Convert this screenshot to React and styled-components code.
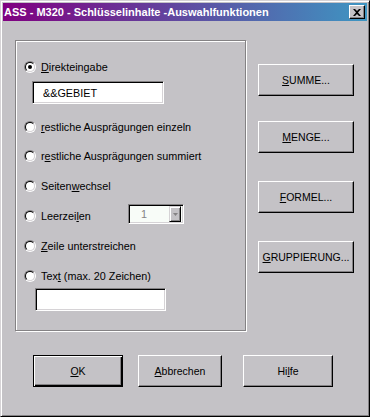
import React from "react";
import styled, { createGlobalStyle } from "styled-components";

const GlobalStyle = createGlobalStyle`
	html, body {
		margin: 0;
		padding: 0;
		background: #c4c2c6;
	}
	body {
		font-family: "Liberation Sans", Arial, sans-serif;
		font-size: 10.8px;
		color: #000;
	}
`;

const Window = styled.div`
	width: 370px;
	height: 417px;
	box-sizing: border-box;
	background: #c4c2c6;
	border: 1px solid;
	border-color: #d6d3d6 #000 #000 #d6d3d6;
	box-shadow: inset 1px 1px #fff, inset -1px -1px #848284;
	padding: 2px;
	display: flex;
	flex-direction: column;
`;

const TitleBar = styled.div`
	height: 18px;
	flex-shrink: 0;
	display: flex;
	align-items: center;
	padding: 0 2px 0 1px;
	background: linear-gradient(to right, #800080, #3e96c2);
	color: #fff;
	font-weight: bold;
	font-size: 11px;
`;

const TitleText = styled.span`
	flex: 1;
	white-space: nowrap;
`;

const CloseButton = styled.div`
	width: 16px;
	height: 14px;
	box-sizing: border-box;
	background: #c4c2c6;
	border: 1px solid;
	border-color: #fff #000 #000 #fff;
	box-shadow: inset -1px -1px #848284;
	display: flex;
	align-items: center;
	justify-content: center;
`;

const Main = styled.div`
	display: flex;
	padding: 19px 0 0 12px;
`;

const GroupBox = styled.div`
	width: 231px;
	height: 291px;
	box-sizing: border-box;
	border: 1px solid #848284;
	box-shadow: inset 1px 1px #fff, 1px 1px #fff;
	padding: 16px 0 0 8px;
	display: flex;
	flex-direction: column;
`;

const OptionRow = styled.div`
	display: flex;
	align-items: center;
	height: 20px;
	margin-top: ${(p) => p.$mt || 0}px;
`;

const Radio = styled.span`
	position: relative;
	width: 12px;
	height: 12px;
	box-sizing: border-box;
	border-radius: 50%;
	border: 1px solid;
	border-color: #848284 #fff #fff #848284;
	margin-right: 5px;
	flex-shrink: 0;
	&::before {
		content: "";
		position: absolute;
		inset: 0;
		border-radius: 50%;
		border: 1px solid;
		border-color: #000 #d6d3d6 #d6d3d6 #000;
		background: #fff;
	}
	&::after {
		content: "";
		display: ${(p) => (p.$checked ? "block" : "none")};
		position: absolute;
		left: 3px;
		top: 3px;
		width: 4px;
		height: 4px;
		border-radius: 50%;
		background: #000;
	}
`;

const Label = styled.span`
	white-space: nowrap;
	width: ${(p) => (p.$w ? `${p.$w}px` : "auto")};
`;

const Key = styled.span`
	text-decoration: underline;
`;

const TextField = styled.input`
	width: ${(p) => p.$w}px;
	height: 23px;
	box-sizing: border-box;
	margin: ${(p) => p.$mt}px 0 0 ${(p) => p.$ml}px;
	border: 1px solid;
	border-color: #848284 #fff #fff #848284;
	box-shadow: inset 1px 1px #000, inset -1px -1px #d6d3d6;
	background: #fff;
	outline: none;
	padding: 0 0 0 10px;
	font-family: "Liberation Sans", Arial, sans-serif;
	font-size: 10.8px;
	color: #000;
`;

const Combo = styled.div`
	width: 56px;
	height: 20px;
	box-sizing: border-box;
	margin-bottom: 4px;
	border: 1px solid;
	border-color: #848284 #fff #fff #848284;
	box-shadow: inset 1px 1px #000, inset -1px -1px #d6d3d6;
	background: #f8fcf8;
	display: flex;
	align-items: center;
	padding: 2px;
	color: #848284;
`;

const ComboValue = styled.span`
	flex: 1;
	padding-left: 10px;
`;

const ComboArrow = styled.div`
	width: 12px;
	height: 16px;
	box-sizing: border-box;
	background: #c4c2c6;
	border: 1px solid;
	border-color: #d6d3d6 #000 #000 #d6d3d6;
	box-shadow: inset 1px 1px #fff, inset -1px -1px #848284;
	display: flex;
	align-items: center;
	justify-content: center;
`;

const SideColumn = styled.div`
	display: flex;
	flex-direction: column;
	padding: 24px 0 0 12px;
`;

const Button = styled.button`
	width: ${(p) => p.$w}px;
	height: 32px;
	box-sizing: border-box;
	margin: ${(p) => p.$mt || 0}px 0 0 ${(p) => p.$ml || 0}px;
	padding: 0;
	background: #c4c2c6;
	border: 1px solid;
	border-color: ${(p) => (p.$default ? "#000" : "#fff #000 #000 #fff")};
	box-shadow: ${(p) =>
		p.$default
			? "inset 1px 1px #fff, inset -1px -1px #000, inset -2px -2px #848284"
			: "inset -1px -1px #848284"};
	font-family: "Liberation Sans", Arial, sans-serif;
	font-size: 10.5px;
	color: #000;
	cursor: default;
`;

const ButtonRow = styled.div`
	display: flex;
	padding: 24px 0 0 30px;
`;

function Option({ checked, children, mt, w }) {
	return (
		<OptionRow $mt={mt}>
			<Radio $checked={checked} />
			<Label $w={w}>{children}</Label>
		</OptionRow>
	);
}

export default function App() {
	return (
		<>
			<GlobalStyle />
			<Window>
				<TitleBar>
					<TitleText>ASS - M320 - Schlüsselinhalte -Auswahlfunktionen</TitleText>
					<CloseButton>
						<svg width="8" height="7" viewBox="0 0 8 7">
							<path d="M0 0h2l2 2 2-2h2L5 3.5 8 7H6L4 5 2 7H0l3-3.5z" fill="#000" />
						</svg>
					</CloseButton>
				</TitleBar>
				<Main>
					<GroupBox>
						<Option checked>
							<Key>D</Key>irekteingabe
						</Option>
						<TextField $w={132} $ml={8} $mt={4} readOnly value="&&GEBIET" />
						<Option mt={13}>
							<Key>r</Key>estliche Ausprägungen einzeln
						</Option>
						<Option mt={9}>
							r<Key>e</Key>stliche Ausprägungen summiert
						</Option>
						<Option mt={10}>
							Seiten<Key>w</Key>echsel
						</Option>
						<OptionRow $mt={10}>
							<Radio />
							<Label $w={87}>
								Leerzei<Key>l</Key>en
							</Label>
							<Combo>
								<ComboValue>1</ComboValue>
								<ComboArrow>
									<svg width="5" height="3" viewBox="0 0 5 3">
										<path d="M0 0h5L2.5 3z" fill="#848284" />
									</svg>
								</ComboArrow>
							</Combo>
						</OptionRow>
						<Option mt={10}>
							<Key>Z</Key>eile unterstreichen
						</Option>
						<Option mt={10}>
							Tex<Key>t</Key> (max. 20 Zeichen)
						</Option>
						<TextField $w={131} $ml={11} $mt={2} readOnly value="" />
					</GroupBox>
					<SideColumn>
						<Button $w={96}>
							<Key>S</Key>UMME...
						</Button>
						<Button $w={96} $mt={25}>
							<Key>M</Key>ENGE...
						</Button>
						<Button $w={96} $mt={28}>
							<Key>F</Key>ORMEL...
						</Button>
						<Button $w={96} $mt={28}>
							<Key>G</Key>RUPPIERUNG...
						</Button>
					</SideColumn>
				</Main>
				<ButtonRow>
					<Button $w={90} $default>
						<Key>O</Key>K
					</Button>
					<Button $w={84} $ml={15}>
						<Key>A</Key>bbrechen
					</Button>
					<Button $w={90} $ml={21}>
						Hi<Key>l</Key>fe
					</Button>
				</ButtonRow>
			</Window>
		</>
	);
}
